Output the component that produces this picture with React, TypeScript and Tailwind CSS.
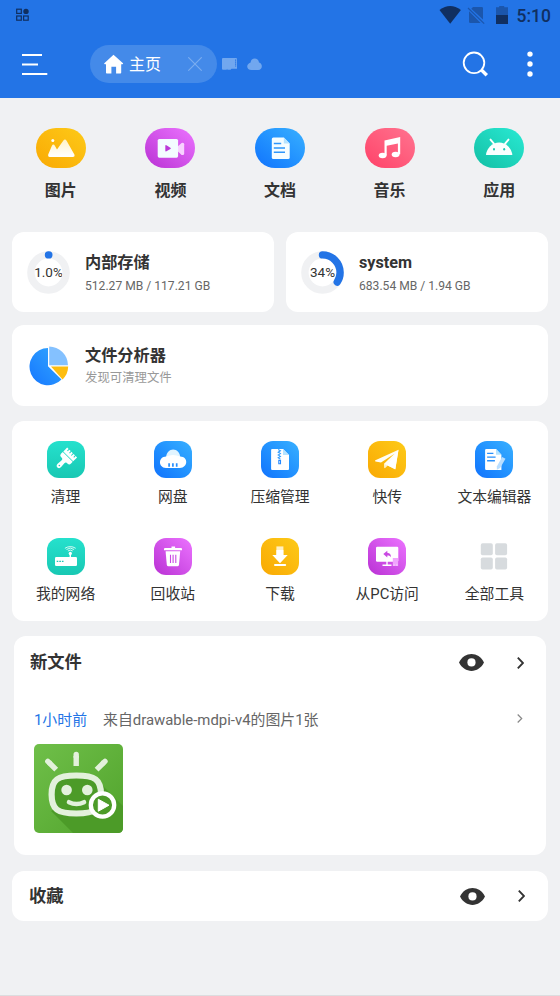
import type { ReactNode } from 'react';

interface Entry {
  label: string;
  tone: string;
  icon: ReactNode;
}

const yellow = 'bg-linear-to-tr from-[#f9a903] to-[#fdca17]';
const purple = 'bg-linear-to-tr from-[#b92fd4] to-[#ec72ff]';
const blue = 'bg-linear-to-tr from-[#1372fd] to-[#39b0ff]';
const pink = 'bg-linear-to-tr from-[#ff3f68] to-[#ff7390]';
const teal = 'bg-linear-to-tr from-[#12bfa4] to-[#29ead4]';

const categories: Entry[] = [
  {
    label: '图片',
    tone: yellow,
    icon: (
      <>
        <circle cx="16.8" cy="12.4" r="1.5" fill="#fff" />
        <path d="M12.2 26.6 15.8 18q1.6-2.8 3.2 0l2 3.6 6.2-8.8q1.8-2.4 3.4 0l7.9 14q.7 2-1.4 2.1H13.5q-2-.2-1.3-2.3Z" fill="url(#fadeYellow)" />
      </>
    ),
  },
  {
    label: '视频',
    tone: purple,
    icon: (
      <>
        <path d="M33 18.2l3.6-3.3q2.6-.8 2.6 1.4v9.2q0 2.2-2.6 1.4L33 23.6Z" fill="#f8d2ff" />
        <rect x="12.7" y="11" width="20.4" height="18.7" rx="1.6" fill="#f3fcff" />
        <path d="M20.3 17.9q0-1.2 1.1-.6l4 2.4q1 .7 0 1.3l-4 2.3q-1.1.6-1.1-.6Z" fill="#bb38d8" />
      </>
    ),
  },
  {
    label: '文档',
    tone: blue,
    icon: (
      <>
        <path d="M18.3 9.4h10.5l5.9 6.2v13.8q0 1.5-1.5 1.5H18.3q-1.5 0-1.5-1.5V10.9q0-1.5 1.5-1.5Z" fill="#f5fdff" />
        <path d="M28.8 9.4l5.9 6.2h-5.9Z" fill="#b5e3ff" />
        <path d="M18.8 15.6h7.4M18.8 19.9H30M18.8 24.2H30" stroke="#2d96fb" strokeWidth="1.5" />
      </>
    ),
  },
  {
    label: '音乐',
    tone: pink,
    icon: (
      <>
        <ellipse cx="17.6" cy="27.5" rx="3.9" ry="2.8" fill="#fff" />
        <ellipse cx="30.6" cy="26.5" rx="3.9" ry="2.8" fill="#fff" />
        <path d="M19.5 12.5 35.2 9v17.3h-2.3V15.4l-11.2 2.4v9.7h-2.2Z" fill="#fff" />
      </>
    ),
  },
  {
    label: '应用',
    tone: teal,
    icon: (
      <>
        <path d="M16.5 11.6l3.4 4M34.5 11.6l-3.4 4" stroke="#fff" strokeWidth="1.9" strokeLinecap="round" />
        <path d="M12 27a13.2 13.6 0 0 1 26.3 0Z" fill="#f9fffe" />
        <ellipse cx="20" cy="21.2" rx="1" ry="1.3" fill="#1dcab3" />
        <ellipse cx="30.2" cy="21.2" rx="1" ry="1.3" fill="#1dcab3" />
      </>
    ),
  },
];

const tools: Entry[] = [
  {
    label: '清理',
    tone: 'bg-linear-to-t from-[#18c8b3] to-[#25e1cd]',
    icon: (
      <g transform="translate(25 12.1) rotate(45)" fill="#fff">
        <path d="M-7.3-.5h2v2.2h1V-.5h2v2.2h1V-.5h2v2.7h1V-.5h2v2.2h1V-.5h2V5H-7.3Z" />
        <path d="M-7.3 5.7H6.7V8Q6.7 10.600 4.500 10.600H3q-1.400.2-1.200 2l.4 5q0 2.800-2.400 2.800t-2.500-2.800l.4-5q.2-1.800-1.200-2h-1.600q-2.200 0-2.200-2.600Z" />
        <circle cx="-.2" cy="17.7" r=".8" fill="#1dd0bc" />
      </g>
    ),
  },
  {
    label: '网盘',
    tone: blue,
    icon: (
      <>
        <path d="M12 17.5C12 5.6 26.3 5.6 26.3 17.5Z" fill="#e1f4ff" />
        <path d="M12.1 15.6Q19 12.6 26.2 15.6c8.3 0 8 11.4-.4 11.4H12c-7.9 0-8-11.4.1-11.4Z" fill="#fff" />
        <path d="M15.1 22.3v3.4M18.9 22.3v3.4M22.7 22.3v3.4" stroke="#278ffd" strokeWidth="1.7" />
      </>
    ),
  },
  {
    label: '压缩管理',
    tone: blue,
    icon: (
      <>
        <path d="M11.2 7.9h10.9l5.9 6.2V28q0 1.1-1.1 1.1H11.2q-1.1 0-1.1-1.1V9q0-1.1 1.1-1.1Z" fill="#fff" />
        <path d="M22 7.9l6 6.2h-6Z" fill="#b5e3ff" />
        <path d="M17.2 8.5l2.2 1.3-2.2 1.4 2.2 1.4-2.2 1.4 2.2 1.4-2.2 1.4 2.2 1.3" fill="none" stroke="#2f9cff" strokeWidth="1.1" />
        <path d="M17.8 19.4h1.7v3.3h-1.7Z" fill="none" stroke="#2589ff" strokeWidth="1.1" />
      </>
    ),
  },
  {
    label: '快传',
    tone: yellow,
    icon: (
      <>
        <path d="M30.5 8.7 27.3 28 19.5 24.4 16.6 27.2 16 22.7 26.5 12.8 13 21.5 7.4 20.4Q6.6 19.8 7.4 19.3Z" fill="#fffdf6" />
        <path d="M30.5 8.7 27.3 28.4l-8-4.1Z" fill="#fff" />
        <path d="M16 22.7l3.4 1.7-2.8 2.8Z" fill="#fff0c3" />
      </>
    ),
  },
  {
    label: '文本编辑器',
    tone: blue,
    icon: (
      <>
        <path d="M11.3 7.9H21l5.4 5.8V29H11.3q-1.2 0-1.2-1.2V9.1q0-1.2 1.2-1.2Z" fill="#fff" />
        <path d="M21 7.9l5.6 5.8H21Z" fill="#b5e3ff" />
        <path d="M12.1 12.4h6.3M12.1 16.1h8.5M12.1 19.8h7.8" stroke="#2990fc" strokeWidth="1.4" />
        <path d="M27.1 16l3.4 1.8-5.4 9.3-3.2 1.7-.1-3.4Z" fill="#b9deff" />
      </>
    ),
  },
  {
    label: '我的网络',
    tone: 'bg-linear-to-t from-[#18c8b3] to-[#25e1cd]',
    icon: (
      <>
        <rect x="8" y="19" width="22" height="9" rx="1.2" fill="#fff" />
        <path d="M9.7 23.4h1.6M12.3 23.4h1.6M14.9 23.4h1.6" stroke="#18c8b3" strokeWidth="1.4" />
        <path d="M23.3 15v4" stroke="#fff" strokeWidth="1.4" />
        <circle cx="23.3" cy="15.4" r="1.6" fill="#fff" />
        <path d="M20.9 13q2.4-1.8 4.8 0M19.5 11.5q3.8-2.9 7.6 0M17.9 10.3q5.4-3.4 10.8 0" fill="none" stroke="#fff" strokeWidth=".8" />
      </>
    ),
  },
  {
    label: '回收站',
    tone: purple,
    icon: (
      <>
        <path d="M17.5 10V8.6h3.6V10H27q1 0 1 1v1.2H10V11q0-1 1-1Z" fill="#fff" />
        <path d="M11.6 13.3h14.6L25 26.7q-.2 1.5-1.6 1.5h-9q-1.4 0-1.6-1.5Z" fill="#fff" />
        <path d="M16.5 16.8v8.1M19.1 16.8v8.1M21.8 16.8v8.1" stroke="#c94ae2" strokeWidth="1.1" />
      </>
    ),
  },
  {
    label: '下载',
    tone: yellow,
    icon: (
      <>
        <path d="M15.4 8.4h7V17h-7Z" fill="#fff0c3" />
        <path d="M15.4 12h7v5h4.3L19 25.2 11.3 17h4.1Z" fill="#fff" />
        <path d="M14 27.1h10.2" stroke="#fff" strokeWidth="2" strokeLinecap="round" />
      </>
    ),
  },
  {
    label: '从PC访问',
    tone: purple,
    icon: (
      <>
        <rect x="8" y="8.7" width="22.3" height="15" rx="1.2" fill="#fff" />
        <path d="M19 23v4M14.5 27.3h9" stroke="#fff" strokeWidth="1.4" />
        <path d="M15.3 16l4-3.3v2c2.6.2 3.7 1.8 3.7 4.5-.8-1.3-1.9-1.8-3.7-1.7v2Z" fill="#c94ae2" />
        <rect x="24.8" y="20" width="5.3" height="8" fill="#f0a5fd" />
        <path d="M25.5 27h1M28.4 27h1" stroke="#fff" strokeWidth=".8" />
      </>
    ),
  },
  {
    label: '全部工具',
    tone: '',
    icon: (
      <g fill="#d7dbde">
        <rect x="5.8" y="5.2" width="12" height="12" rx="1.8" />
        <rect x="20.1" y="5.2" width="12" height="12" rx="1.8" />
        <rect x="5.8" y="19.5" width="12" height="12" rx="1.8" />
        <rect x="20.1" y="19.5" width="12" height="12" rx="1.8" />
      </g>
    ),
  },
];

const storages = [
  { name: '内部存储', used: '512.27 MB / 117.21 GB', percent: '1.0%', value: 0.003 },
  { name: 'system', used: '683.54 MB / 1.94 GB', percent: '34%', value: 0.34 },
];

function StatusBar() {
  return (
    <div className="flex h-[30px] items-center justify-between pl-4 pr-[9px]">
      <svg className="h-3.5 w-3.5" viewBox="0 0 14 14" fill="none" stroke="#102f61" strokeWidth="1.2">
        <rect x=".7" y="1.2" width="4.6" height="4.2" />
        <rect x=".7" y="8" width="4.6" height="4.2" />
        <rect x="7.6" y="8" width="4.6" height="4.2" />
        <circle cx="10" cy="3.4" r="2.7" fill="#102f61" stroke="none" />
      </svg>
      <div className="flex items-center">
        <svg className="h-[18px] w-[70px]" viewBox="0 0 70 18">
          <path d="M.5 3.9q10.7-7.8 21.4 0L11.2 17.7Z" fill="#102f61" />
          <path d="M34 1h8.8q1.2 0 1.2 1.2V13.400L32.300 2.700ZM30 5.200 41.600 17H31.200q-1.200 0-1.200-1.200Z" fill="#1b56ac" />
          <path d="M29 2 45.200 17.600" stroke="#1b56ac" strokeWidth="1.2" />
          <path d="M57 1.2h3.2V0h5v1.2H69V9H57Z" fill="#1b56ac" />
          <path d="M57 9h12v9H57Z" fill="#102f61" />
        </svg>
        <span className="ml-2 pt-0.5 text-[17.5px] font-medium leading-[18px] text-[#102f61]">5:10</span>
      </div>
    </div>
  );
}

function Toolbar() {
  return (
    <div className="flex h-[68px] items-center pl-[22px] pr-[27px]">
      <svg className="h-6 w-[26px]" viewBox="0 0 26 24" stroke="#fff" strokeWidth="2">
        <path d="M0 3h20M0 12.4h16M0 22h25.3" />
      </svg>
      <div className="ml-[42px] flex h-[38px] w-[127px] items-center rounded-full bg-[#448ae9] pl-3.5">
        <svg className="h-5 w-5" viewBox="0 0 20 20" fill="#fff">
          <path d="M9.5.8 19 9.3q.4.9-.6.9h-1.2v8.5q0 .8-.8.8h-4.3v-6.7H7.4v6.7H2.8q-.8 0-.8-.8v-8.5H.9q-1 0-.6-.9Z" />
        </svg>
        <span className="ml-[5px] pt-0.5 text-base leading-5 text-white">主页</span>
        <svg className="ml-[27px] h-3.5 w-3.5" viewBox="0 0 14 14" stroke="#7badf0" strokeWidth="1.1">
          <path d="M.3.3 13.7 13.7M13.7.3.3 13.7" />
        </svg>
      </div>
      <svg className="ml-[5px] h-3.5 w-[15px]" viewBox="0 0 15 14">
        <path d="M1 1h13q1 0 1 1v9.800H9.500l-1 1H5.300V11.800l-.8 1H1q-1 0-1-1V2q0-1 1-1Z" fill="#71a7ef" />
        <path d="M13.6 2.6v7" stroke="#2374e6" strokeWidth="1.2" strokeDasharray="1.1 .9" />
      </svg>
      <svg className="ml-2.5 h-3.5 w-4" viewBox="0 0 16 14" fill="#71a7ef">
        <path d="M3.6 5.4C3.8.3 11.6.3 12 5.4c4 1 3.8 7.6-.8 7.6H4.5C-.9 13-1.2 6.8 3.6 5.4Z" />
      </svg>
      <svg className="ml-auto h-[26px] w-[26px]" viewBox="0 0 26 26" fill="none" stroke="#fff">
        <circle cx="12" cy="11.8" r="10.3" strokeWidth="1.8" />
        <path d="M19.2 18.8l5.6 5.4" strokeWidth="3.4" />
      </svg>
      <svg className="ml-[39px] h-[26px] w-1.5" viewBox="0 0 6 26" fill="#fff">
        <circle cx="3" cy="3.1" r="2.7" />
        <circle cx="3" cy="13" r="2.7" />
        <circle cx="3" cy="23" r="2.7" />
      </svg>
    </div>
  );
}

function UsageRing({ percent, value }: { percent: string; value: number }) {
  const length = 2 * Math.PI * 17.6;
  return (
    <div className="grid h-[43px] w-[43px] shrink-0 place-items-center">
      <svg className="col-start-1 row-start-1 h-[43px] w-[43px] -rotate-90" viewBox="0 0 43 43" fill="none" strokeWidth="7.4">
        <circle cx="21.5" cy="21.5" r="17.6" stroke="#f0f1f3" />
        <circle
          cx="21.5"
          cy="21.5"
          r="17.6"
          stroke="#2374e6"
          strokeLinecap="round"
          strokeDasharray={`${length * value} ${length}`}
        />
      </svg>
      <span className="col-start-1 row-start-1 text-[13.5px] leading-4 text-[#333]">{percent}</span>
    </div>
  );
}

function Eye() {
  return (
    <svg className="h-[17px] w-[25px]" viewBox="0 0 25 17">
      <path d="M0 8.5C5.6-2.7 19.4-2.7 25 8.5 19.4 19.7 5.6 19.7 0 8.5Z" fill="#333" />
      <circle cx="12.5" cy="8.4" r="4.1" fill="#fff" />
    </svg>
  );
}

function Chevron() {
  return (
    <svg className="h-3 w-[7px]" viewBox="0 0 7 12" fill="none" stroke="#333" strokeWidth="1.9">
      <path d="M.8.7 6 6 .8 11.3" />
    </svg>
  );
}

function Thumbnail() {
  return (
    <svg className="h-[89px] w-[89px]" viewBox="0 0 89 89">
      <rect width="89" height="89" rx="5" fill="url(#leaf)" />
      <path d="M17 67 39 89h45q5 0 5-5V62L68 41Z" fill="#4c9b28" />
      <g fill="none" stroke="#e3f1dc">
        <path d="M42.2 12v10M15 18.500l7.200 7.200M69.800 18.500l-7.200 7.200" strokeWidth="5.4" />
        <path d="M42.2 10.500v2M13.800 17.300l1.400 1.400M71 17.300l-1.400 1.400" strokeWidth="5.4" strokeLinecap="round" />
        <path d="M42.3 31.5C61 31.5 67 35.5 67 50.5s-6 19-24.7 19-24.7-4-24.7-19 6-19 24.7-19Z" fill="#4c9b28" strokeWidth="6.2" />
        <path d="M35 58.2q7.5 3.6 15 0" strokeWidth="4.6" strokeLinecap="round" />
      </g>
      <circle cx="32.6" cy="46" r="5.3" fill="#e3f1dc" />
      <circle cx="53.3" cy="46" r="5.3" fill="#e3f1dc" />
      <circle cx="68.5" cy="61" r="11.7" fill="#4c9b28" stroke="#fff" strokeWidth="4.3" />
      <path d="M64.3 55.3 75 61.2 64.3 67.2Z" fill="#fff" stroke="#fff" strokeLinejoin="round" />
    </svg>
  );
}

export default function App() {
  return (
    <div className="flex h-[996px] w-[560px] flex-col overflow-hidden border-b border-[#dcdddf] bg-[#f0f1f3] font-[Roboto,'Noto_Sans_CJK_SC',sans-serif] text-[#333]">
      {/* Shared gradients */}
      <svg className="absolute h-0 w-0">
        <defs>
          <linearGradient id="fadeYellow" x1="0" y1="0" x2="0" y2="1">
            <stop offset="0" stopColor="#fff3c9" />
            <stop offset="1" stopColor="#fff" />
          </linearGradient>
          <linearGradient id="leaf" x1="0" y1="0" x2="1" y2="1">
            <stop offset="0" stopColor="#6fbf49" />
            <stop offset="1" stopColor="#51a32c" />
          </linearGradient>
          <linearGradient id="pieBlue" x1="0" y1="1" x2="1" y2="0">
            <stop offset="0" stopColor="#1677ff" />
            <stop offset="1" stopColor="#33a8ff" />
          </linearGradient>
        </defs>
      </svg>

      <header className="bg-[#2374e6]">
        <StatusBar />
        <Toolbar />
      </header>

      <nav className="grid grid-cols-5 px-1.5 pt-[30px]">
        {categories.map((c) => (
          <div key={c.label} className="flex flex-col items-center">
            <div className={`h-10 w-[50px] rounded-[20px] ${c.tone}`}>
              <svg className="h-10 w-[50px]" viewBox="0 0 50 40">{c.icon}</svg>
            </div>
            <span className="mt-[11px] text-base font-bold leading-6">{c.label}</span>
          </div>
        ))}
      </nav>

      {/* Storage cards */}
      <div className="mt-[29px] grid grid-cols-2 gap-3 px-3">
        {storages.map((s) => (
          <div key={s.name} className="flex h-20 items-center rounded-xl bg-white pl-[15px]">
            <UsageRing percent={s.percent} value={s.value} />
            <div className="ml-[15px] pt-[3px]">
              <div className="text-[16.2px] font-bold leading-6">{s.name}</div>
              <div className="text-[12.1px] leading-[22px] text-[#666]">{s.used}</div>
            </div>
          </div>
        ))}
      </div>

      <div className="mx-3 mt-[13px] flex h-[81px] items-center rounded-xl bg-white pl-[17px]">
        <svg className="h-10 w-10" viewBox="0 0 40 40">
          <path d="M19 2v18.2L32.5 33.5A18.6 18.6 0 1 1 19 2Z" fill="url(#pieBlue)" />
          <path d="M20.2.5A19 19 0 0 1 39 19.2H20.2Z" fill="#84c1ff" />
          <path d="M22 20.6h17.200q-.2 7.600-5.600 12.800Z" fill="#fdbd10" />
        </svg>
        <div className="ml-4 pt-px">
          <div className="text-[16.2px] font-bold leading-6">文件分析器</div>
          <div className="text-[12.4px] leading-5 text-[#999]">发现可清理文件</div>
        </div>
      </div>

      {/* Tools */}
      <div className="mx-3 mt-[15px] grid h-[200px] grid-cols-5 content-start gap-y-[30px] rounded-xl bg-white pt-5">
        {tools.map((t) => (
          <div key={t.label} className="flex flex-col items-center">
            <div className={`h-[37px] w-[38px] rounded-xl ${t.tone}`}>
              <svg className="h-[37px] w-[38px]" viewBox="0 0 38 37">{t.icon}</svg>
            </div>
            <span className="mt-[9px] whitespace-nowrap text-[14.8px] leading-[21px]">{t.label}</span>
          </div>
        ))}
      </div>

      {/* New files */}
      <section className="mx-3.5 mt-[15px] h-[219px] rounded-xl bg-white">
        <div className="flex h-[53px] items-center pl-4 pr-[22px]">
          <h2 className="pt-px text-[17.3px] font-bold">新文件</h2>
          <div className="ml-auto flex items-center gap-[33px]">
            <Eye />
            <Chevron />
          </div>
        </div>
        <div className="mt-[19px] flex h-[22px] items-center pl-5 pr-[23px] text-[14.9px]">
          <span className="pt-0.5 text-[#2374e6]">1小时前</span>
          <span className="ml-4 pt-0.5 text-[#666]">来自drawable-mdpi-v4的图片1张</span>
          <svg className="mb-0.5 ml-auto h-[9px] w-[6px]" viewBox="0 0 6 9" fill="none" stroke="#888" strokeWidth="1.2">
            <path d="M.7.5 4.7 4.5.7 8.5" />
          </svg>
        </div>
        <div className="pl-5 pt-3.5">
          <Thumbnail />
        </div>
      </section>

      {/* Favorites */}
      <section className="mx-3 mt-4 flex h-[50px] items-center rounded-xl bg-white pl-[17px] pr-[23px]">
        <h2 className="pt-0.5 text-[17.3px] font-bold">收藏</h2>
        <div className="ml-auto flex items-center gap-[33px]">
          <Eye />
          <Chevron />
        </div>
      </section>
    </div>
  );
}
